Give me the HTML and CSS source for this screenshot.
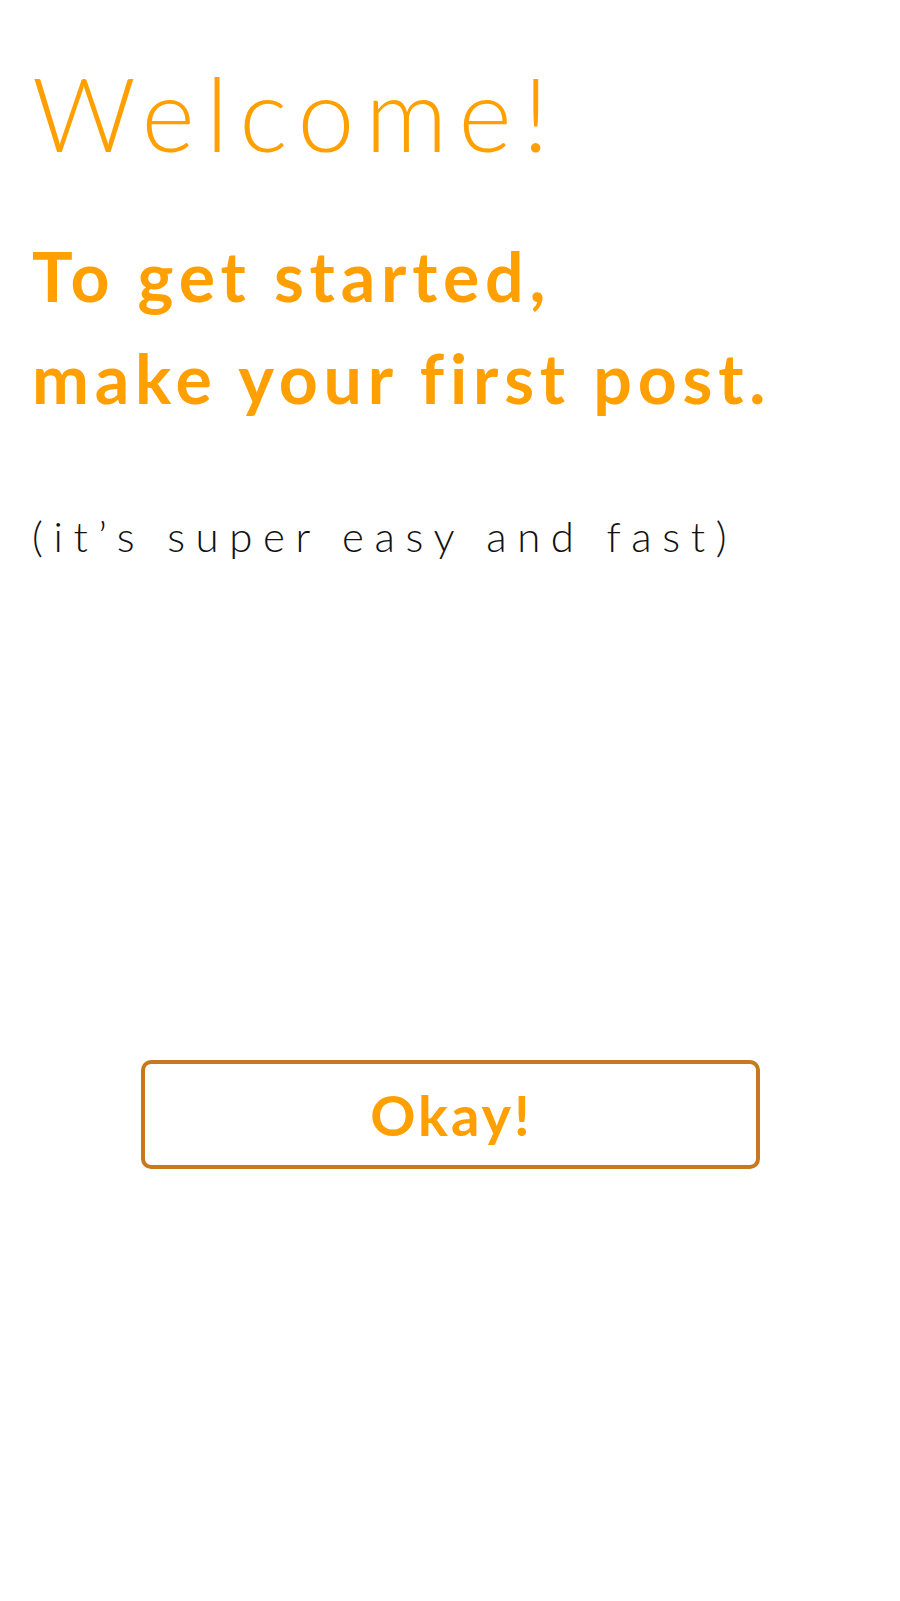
FILE: index.html
```html
<!DOCTYPE html>
<html lang="en">
<head>
<meta charset="utf-8">
<title>Welcome</title>
<link rel="stylesheet" href="styles.css">
</head>
<body>
<main class="page">
  <section class="intro">
    <h1 class="title">Welcome!</h1>
    <h2 class="lead">To get started,<br>make your first post.</h2>
    <p class="note">(it’s super easy and fast)</p>
  </section>
  <div class="actions">
    <button class="okay" type="button">Okay!</button>
  </div>
</main>
</body>
</html>
```
FILE: styles.css
```css
html, body {
  margin: 0;
  padding: 0;
  background: #ffffff;
}
body {
  font-family: Lato, "Open Sans", "DejaVu Sans", sans-serif;
}
.page {
  width: 900px;
  min-height: 1601px;
  padding-top: 62px;
  box-sizing: border-box;
}
.intro {
  padding-left: 32px;
}
.title {
  margin: 0;
  font-size: 102px;
  line-height: 102px;
  font-weight: 300;
  color: #ffa000;
  letter-spacing: 11px;
}
.lead {
  margin: 61px 0 0 0;
  font-size: 68px;
  line-height: 102px;
  font-weight: 700;
  color: #ffa000;
  letter-spacing: 5.8px;
}
.note {
  margin: 77px 0 0 0;
  font-size: 42px;
  line-height: 60px;
  font-weight: 300;
  color: #111111;
  letter-spacing: 10.6px;
}
.actions {
  display: flex;
  justify-content: center;
  margin-top: 494px;
}
.okay {
  box-sizing: border-box;
  width: 619px;
  height: 109px;
  border: 4px solid #c8791f;
  border-radius: 10px;
  background: #ffffff;
  color: #ffa000;
  font-family: Lato, "Open Sans", "DejaVu Sans", sans-serif;
  font-size: 56px;
  font-weight: 700;
  letter-spacing: 3px;
  padding: 0 0 0 3px;
}
```
